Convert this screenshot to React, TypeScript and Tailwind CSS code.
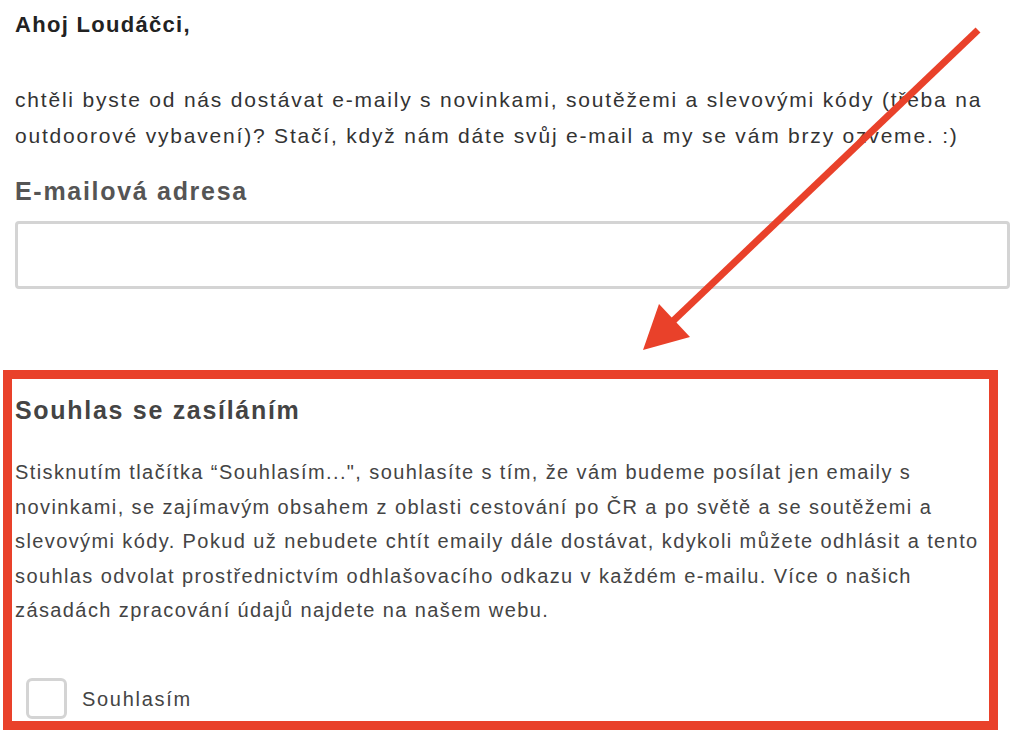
const RED = "#e9412a";

function Arrow() {
  return (
    <svg
      className="absolute left-0 top-0 pointer-events-none"
      width={1024}
      height={734}
      viewBox="0 0 1024 734"
    >
      <line x1={978} y1={30} x2={672} y2={322} stroke={RED} strokeWidth={7} strokeLinecap="butt" />
      <polygon points="643,350 659,304 690,337" fill={RED} />
    </svg>
  );
}

export default function App() {
  return (
    <div className="relative w-[1024px] h-[734px] overflow-hidden bg-white font-['Liberation_Sans',Arial,sans-serif]">
      <div className="flex flex-col pl-[15px] pr-[14px]">
        <h1 className="mt-[13px] text-[22px] leading-[24px] font-bold tracking-[1.3px] text-[#222]">Ahoj Loudáčci,</h1>
        <p className="mt-[45px] text-[21px] leading-[36px] tracking-[1.8px] text-[#333] whitespace-nowrap">
          chtěli byste od nás dostávat e-maily s novinkami, soutěžemi a slevovými kódy (třeba na
          <br />
          outdoorové vybavení)? Stačí, když nám dáte svůj e-mail a my se vám brzy ozveme. :)
        </p>
        <label className="mt-[22px] text-[25px] leading-[30px] font-bold tracking-[1.7px] text-[#555]">E-mailová adresa</label>
        <input
          type="email"
          className="mt-[15px] h-[68px] w-full rounded-[4px] border-[3px] border-[#d4d4d4] bg-white outline-none"
        />
      </div>

      <section className="mt-[81px] ml-[3px] w-[995px] h-[360px] border-[9px] border-[#e9412a] px-[3px] flex flex-col">
        <h2 className="mt-[17px] text-[25px] leading-[28px] font-bold tracking-[1.7px] text-[#444]">Souhlas se zasíláním</h2>
        <p className="mt-[31px] text-[20px] leading-[34.5px] tracking-[1.4px] text-[#444] whitespace-nowrap">
          Stisknutím tlačítka “Souhlasím...", souhlasíte s tím, že vám budeme posílat jen emaily s
          <br />
          novinkami, se zajímavým obsahem z oblasti cestování po ČR a po světě a se soutěžemi a
          <br />
          slevovými kódy. Pokud už nebudete chtít emaily dále dostávat, kdykoli můžete odhlásit a tento
          <br />
          souhlas odvolat prostřednictvím odhlašovacího odkazu v každém e-mailu. Více o našich
          <br />
          zásadách zpracování údajů najdete na našem webu.
        </p>
        <label className="mt-auto mb-[2px] ml-[11px] flex items-center gap-[15px]">
          <span className="w-[41px] h-[41px] rounded-[6px] border-[3px] border-[#d4d4d4] bg-white" />
          <span className="text-[20px] leading-[24px] tracking-[1.7px] text-[#444]">Souhlasím</span>
        </label>
      </section>

      <Arrow />
    </div>
  );
}
